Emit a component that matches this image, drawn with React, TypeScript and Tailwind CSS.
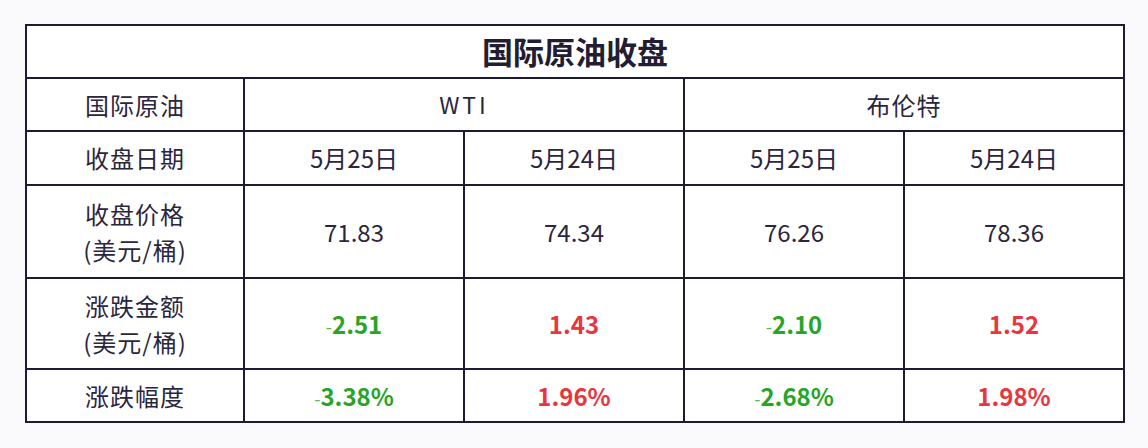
const font = { fontFamily: '"Noto Sans CJK SC", "Noto Sans", sans-serif' };

type Cell = { text: string; tone?: "up" | "down" };

const rows: { label: string[]; h: string; cells: Cell[] }[] = [
  {
    label: ["收盘价格", "(美元/桶)"],
    h: "h-[91px]",
    cells: [{ text: "71.83" }, { text: "74.34" }, { text: "76.26" }, { text: "78.36" }],
  },
  {
    label: ["涨跌金额", "(美元/桶)"],
    h: "h-[89px]",
    cells: [
      { text: "-2.51", tone: "down" },
      { text: "1.43", tone: "up" },
      { text: "-2.10", tone: "down" },
      { text: "1.52", tone: "up" },
    ],
  },
  {
    label: ["涨跌幅度"],
    h: "h-[51px]",
    cells: [
      { text: "-3.38%", tone: "down" },
      { text: "1.96%", tone: "up" },
      { text: "-2.68%", tone: "down" },
      { text: "1.98%", tone: "up" },
    ],
  },
];

// cells are white boxes on a dark grid; the 2px gaps draw the rules
const cell = "bg-white flex flex-col items-center justify-center";

function Value({ c }: { c: Cell }) {
  if (c.tone === "down") {
    // the source draws the minus as a thin short dash
    return (
      <span className="text-[#28a428] font-semibold">
        <span className="font-normal text-[18px] text-[#5cb85c]">-</span>
        {c.text.slice(1)}
      </span>
    );
  }
  if (c.tone === "up") return <span className="text-[#e8363e] font-semibold">{c.text}</span>;
  return <span>{c.text}</span>;
}

export default function App() {
  return (
    <div className="w-[1148px] h-[448px] bg-[#fafafc] pt-[24px] pl-[25px]" style={font}>
      <div className="w-[1100px] bg-[#1d1a33] p-[2px] grid grid-cols-[216px_218px_218px_218px_218px] gap-[2px] text-[#2b2640]">
        <div className={`${cell} col-span-5 h-[51px] text-[31px] font-bold text-[#221d33]`}>
          国际原油收盘
        </div>

        <div className={`${cell} h-[51px] text-[24px] tracking-[1px]`}>国际原油</div>
        <div className={`${cell} col-span-2 text-[23px] tracking-[3px]`}>WTI</div>
        <div className={`${cell} col-span-2 text-[24px] tracking-[1px]`}>布伦特</div>

        <div className={`${cell} h-[52px] text-[24px] tracking-[1px]`}>收盘日期</div>
        <div className={`${cell} text-[24px]`}>5月25日</div>
        <div className={`${cell} text-[24px]`}>5月24日</div>
        <div className={`${cell} text-[24px]`}>5月25日</div>
        <div className={`${cell} text-[24px]`}>5月24日</div>

        {rows.map((r) => (
          <div key={r.label[0]} className="contents">
            <div className={`${cell} ${r.h} text-[24px] leading-[36px] tracking-[1px]`}>
              {r.label.map((l) => (
                <span key={l}>{l}</span>
              ))}
            </div>
            {r.cells.map((c, i) => (
              <div key={i} className={`${cell} text-[24px]`}>
                <Value c={c} />
              </div>
            ))}
          </div>
        ))}
      </div>
    </div>
  );
}
